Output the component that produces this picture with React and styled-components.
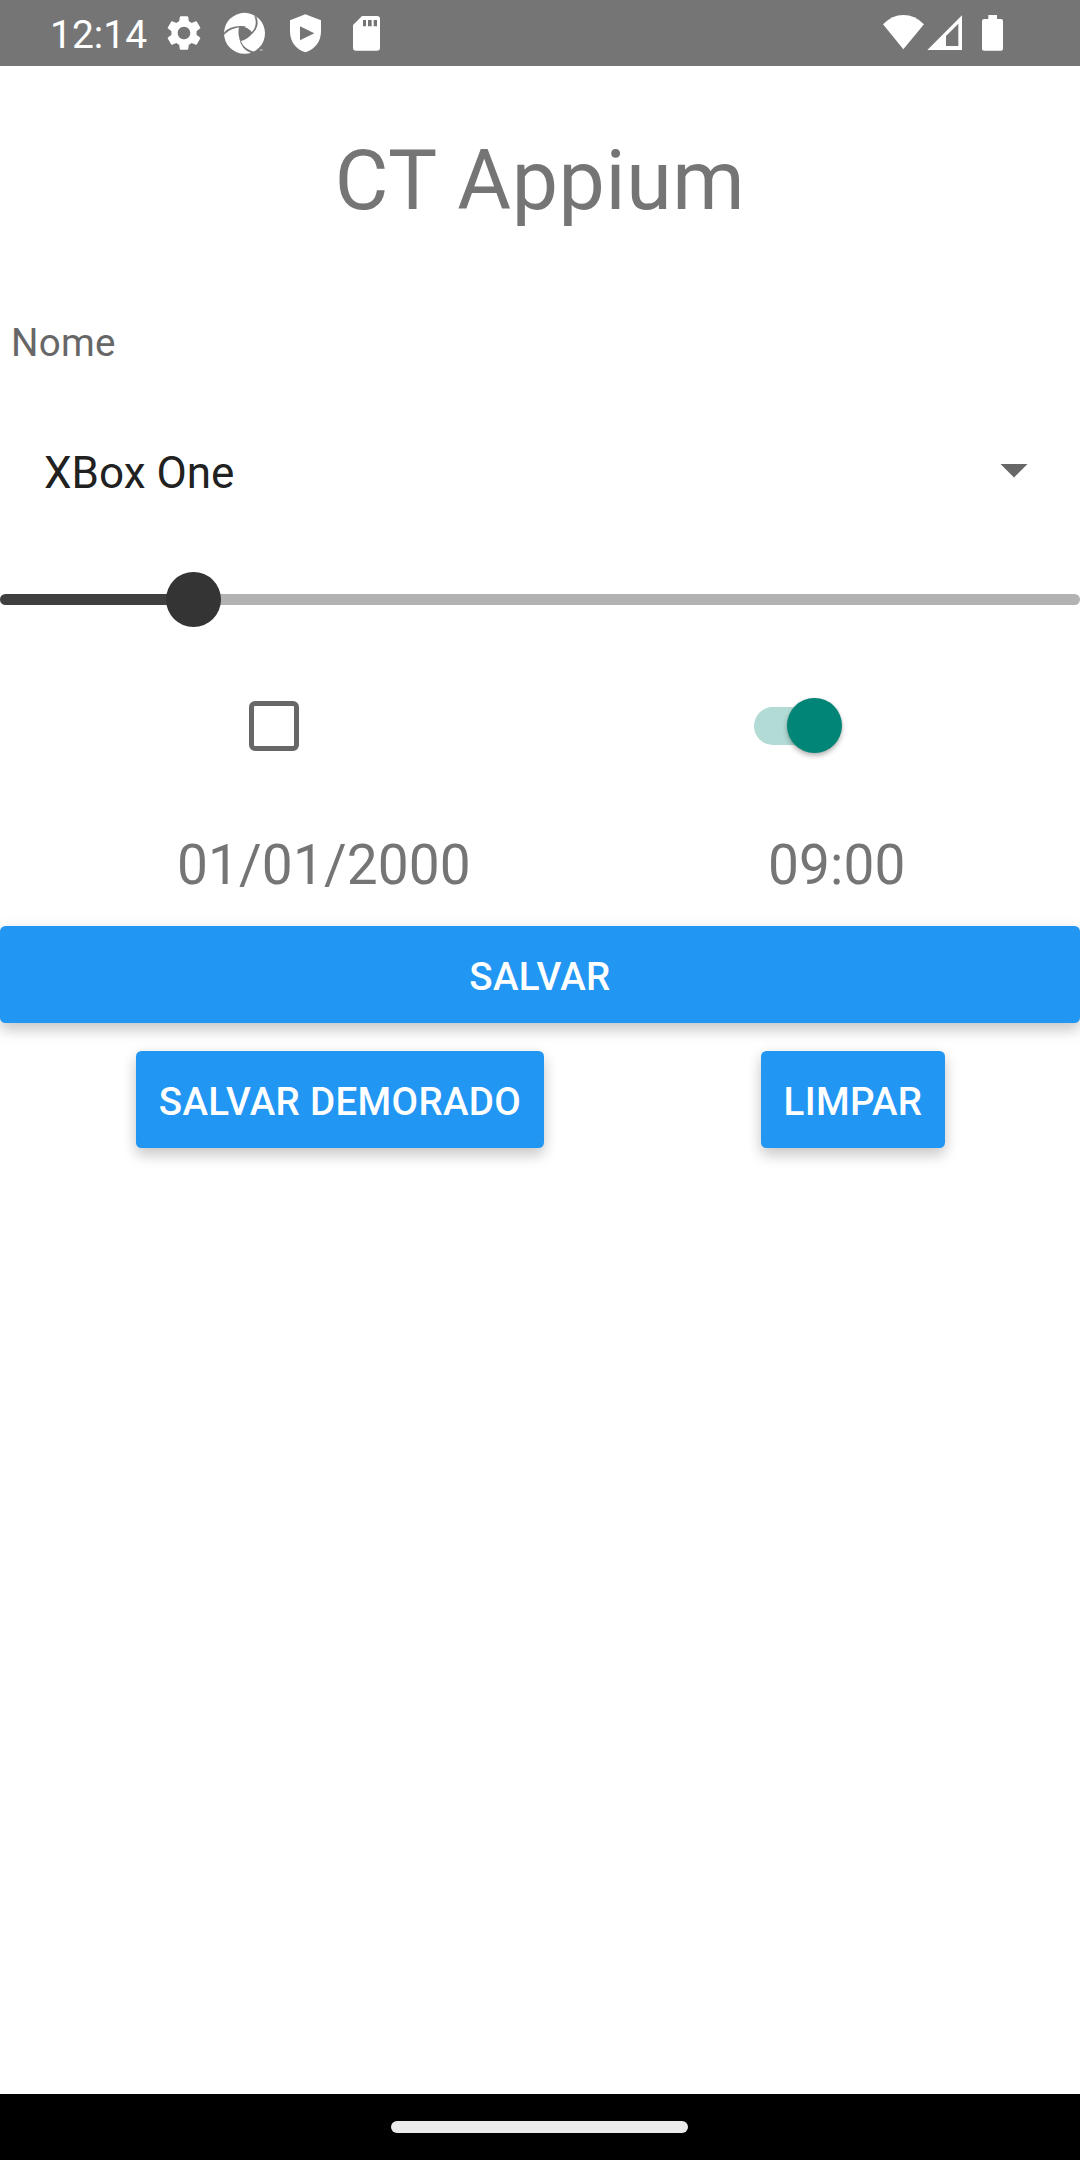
import React from "react";
import styled, { createGlobalStyle } from "styled-components";
import { MdSettings } from "react-icons/md";

const GlobalStyle = createGlobalStyle`
  *, *::before, *::after { box-sizing: border-box; }
  body { margin: 0; background: #fff; }
  button { border: 0; margin: 0; font: inherit; }
`;

const Screen = styled.div`
  display: flex;
  flex-direction: column;
  width: 1080px;
  height: 2160px;
  overflow: hidden;
  background: #fff;
  color: #757575;
  font-family: Roboto, "Liberation Sans", sans-serif;
`;

const StatusBar = styled.header`
  display: flex;
  justify-content: space-between;
  flex: none;
  height: 66px;
  padding: 0 75px 0 50px;
  background: #757575;
  color: #fff;
`;

const StatusGroup = styled.div`
  display: flex;
  align-items: center;
`;

const Clock = styled.span`
  width: 112px;
  padding-top: 3px;
  font-size: 39px;
  line-height: 46px;
  white-space: nowrap;
`;

const Glyph = styled.svg`
  display: block;
  flex: none;
  width: ${(p) => p.$width}px;
  height: 66px;
  margin-left: ${(p) => p.$gap || 0}px;
  fill: #fff;
`;

const Gear = styled(MdSettings)`
  flex: none;
  width: 42px;
  height: 42px;
  margin: 0 0 0 1px;
`;

const Content = styled.main`
  display: flex;
  flex: 1;
  flex-direction: column;
`;

const Title = styled.h1`
  margin: 0;
  height: 228px;
  padding-top: 66px;
  font-size: 82.5px;
  font-weight: 400;
  letter-spacing: 0.6px;
  line-height: 97px;
  text-align: center;
`;

const NameField = styled.label`
  height: 110px;
  padding: 26px 11px 0;
  color: #676767;
  font-size: 38.5px;
  letter-spacing: 0.3px;
  line-height: 45px;
`;

const Select = styled.div`
  display: flex;
  align-items: center;
  justify-content: space-between;
  height: 132px;
  padding: 6px 52px 0 44px;
  color: #212121;
  font-size: 44px;
  line-height: 52px;
`;

const Caret = styled.i`
  width: 28px;
  height: 14px;
  margin-top: -5px;
  background: #676767;
  clip-path: polygon(0 0, 100% 0, 50% 100%);
`;

const Slider = styled.div`
  display: flex;
  align-items: center;
  height: 127px;
`;

const Track = styled.div`
  flex: ${(p) => (p.$filled ? "0 0 167px" : 1)};
  height: 11px;
  border-radius: ${(p) => (p.$filled ? "6px 0 0 6px" : "0 6px 6px 0")};
  background: ${(p) => (p.$filled ? "#3f3f3f" : "#b2b2b2")};
`;

const Thumb = styled.div`
  flex: none;
  width: 55px;
  height: 55px;
  margin: 0 -1px;
  border-radius: 50%;
  background: #343434;
  z-index: 1;
`;

const ToggleRow = styled.div`
  display: flex;
  align-items: center;
  height: 126px;
  padding-left: 249px;
`;

const Checkbox = styled.div`
  width: 50px;
  height: 50px;
  border: 5.5px solid #676767;
  border-radius: 6px;
`;

const Switch = styled.div`
  display: flex;
  align-items: center;
  justify-content: flex-end;
  width: 76px;
  height: 38px;
  margin-left: 455px;
  border-radius: 19px;
  background: #b2dbd6;
`;

const Knob = styled.div`
  flex: none;
  width: 55px;
  height: 55px;
  margin: 0 -12px 1px 0;
  border-radius: 50%;
  background: #008577;
  box-shadow: 0 3px 5px rgba(0, 0, 0, 0.28), 0 0 2px rgba(0, 0, 0, 0.12);
`;

const DateRow = styled.div`
  display: flex;
  height: 137px;
  padding: 44px 0 0 177px;
  font-size: 55px;
  letter-spacing: 0.12px;
  line-height: 64px;
`;

const DateText = styled.span`
  width: 591px;
`;

const Button = styled.button`
  display: block;
  flex: none;
  width: ${(p) => p.$width};
  height: 97px;
  padding: 4px 0 0;
  border-radius: 5.5px;
  background: #2196f3;
  box-shadow: 0 8px 14px rgba(0, 0, 0, 0.17), 0 2px 16px rgba(0, 0, 0, 0.08);
  color: #fff;
  font-size: 38.5px;
  font-weight: 500;
  letter-spacing: 0.33px;
  line-height: 45px;
  text-align: center;
`;

const ButtonRow = styled.div`
  display: flex;
  gap: 217px;
  padding: 28px 0 0 136px;
`;

const NavBar = styled.footer`
  display: flex;
  flex: none;
  justify-content: center;
  height: 66px;
  padding: 27px 1px 0 0;
  background: #000;
`;

const HomeHandle = styled.div`
  width: 297px;
  height: 12px;
  border-radius: 6px;
  background: #ebebeb;
`;

export default function App() {
  return (
    <Screen>
      <GlobalStyle />
      <StatusBar>
        <StatusGroup>
          <Clock>12:14</Clock>
          <Gear />
          <Glyph $width={45} $gap={17} viewBox="576 0 135 198">
            <circle cx="643.5" cy="100" r="61.5" />
            <g fill="#757575">
              <path d="M628 79Q654 80 668 99Q654 118 632 124Q621 102 628 79Z" />
              <path d="M582 98Q602 74 646 79V82Q606 78 582 104Z" />
              <path d="M673 47L679 50Q691 78 667 101L664 98Q685 77 673 47Z" />
              <path d="M627 112L632 122Q642 147 672 155L666 160Q633 150 627 112Z" />
            </g>
            <path d="M689 148H698V152H689Z" opacity="0.5" />
          </Glyph>
          <Glyph $width={35} $gap={21} viewBox="774 0 105 198">
            <path
              fillRule="evenodd"
              d="M826 43L873 61V94C873 125 855 148 826 157C797 148 780 125 780 94V61ZM810 79V121L853 100Z"
            />
          </Glyph>
          <Glyph $width={31} $gap={28} viewBox="963 0 93 198">
            <path
              fillRule="evenodd"
              d="M996 48H1041Q1050 48 1050 57V143Q1050 152 1041 152H978Q969 152 969 143V75ZM999 60V79H1008V60ZM1014 60V79H1025V60ZM1031 60V79H1041V60Z"
            />
          </Glyph>
        </StatusGroup>
        <StatusGroup>
          <Glyph $width={45} viewBox="63 0 135 198">
            <path d="M130 148L69 73Q96 45 130 45Q165 45 192 73Z" />
          </Glyph>
          <Glyph $width={37} viewBox="198 0 111 198">
            <path fillRule="evenodd" d="M202 150L306 46V150ZM258 108V138H295V71Z" />
          </Glyph>
          <Glyph $width={25} $gap={17} viewBox="360 0 75 198">
            <path d="M385 45H411V57H423Q429 57 429 63V146Q429 152 423 152H372Q366 152 366 146V63Q366 57 372 57H385Z" />
          </Glyph>
        </StatusGroup>
      </StatusBar>

      <Content>
        <Title>CT Appium</Title>
        <NameField>Nome</NameField>
        <Select>
          XBox One
          <Caret />
        </Select>
        <Slider>
          <Track $filled />
          <Thumb />
          <Track />
        </Slider>
        <ToggleRow>
          <Checkbox />
          <Switch>
            <Knob />
          </Switch>
        </ToggleRow>
        <DateRow>
          <DateText>01/01/2000</DateText>
          <span>09:00</span>
        </DateRow>
        <Button $width="100%">SALVAR</Button>
        <ButtonRow>
          <Button $width="408px">SALVAR DEMORADO</Button>
          <Button $width="184px">LIMPAR</Button>
        </ButtonRow>
      </Content>

      <NavBar>
        <HomeHandle />
      </NavBar>
    </Screen>
  );
}
